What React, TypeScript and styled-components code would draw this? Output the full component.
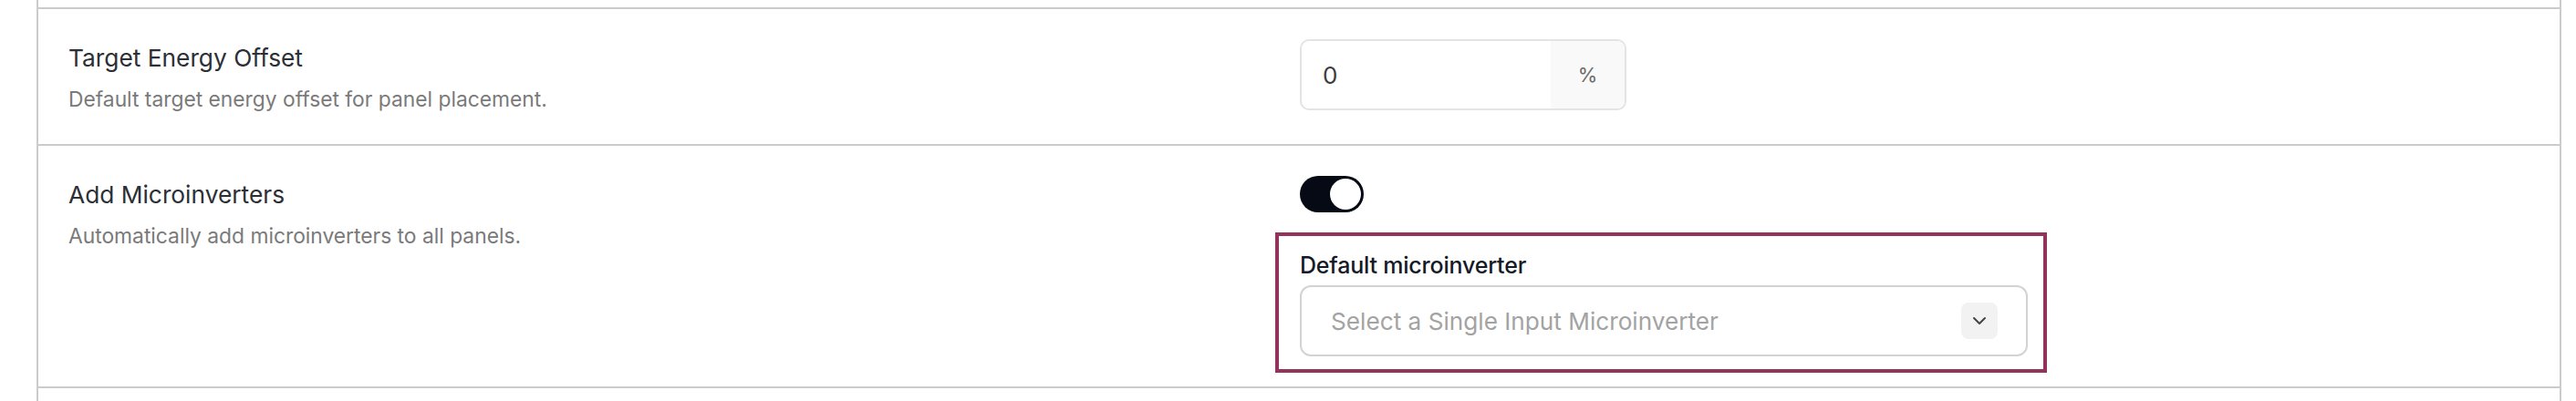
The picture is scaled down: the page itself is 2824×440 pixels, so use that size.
import React from 'react';
import styled, { createGlobalStyle } from 'styled-components';
import { ChevronDown } from 'lucide-react';

const GlobalStyle = createGlobalStyle`
	html,
	body {
		margin: 0;
		padding: 0;
		background: #ffffff;
	}

	body {
		font-family: Inter, 'Noto Sans', sans-serif;
		-webkit-font-smoothing: antialiased;
	}
`;

const Panel = styled.div`
	margin-left: 40px;
	width: 2768px;
	box-sizing: border-box;
	border-left: 2px solid #cbcbcb;
	border-right: 2px solid #cbcbcb;
`;

const Stub = styled.div<{ $height: number; $ruled?: boolean }>`
	height: ${(p) => p.$height}px;
	border-top: ${(p) => (p.$ruled ? '2px solid #cbcbcb' : 'none')};
`;

const Row = styled.div`
	display: grid;
	grid-template-columns: 1350px 1fr;
	align-items: start;
	padding: 33px 33px;
	border-top: 2px solid #cbcbcb;
`;

const Info = styled.div`
	display: flex;
	flex-direction: column;
	gap: 8px;
`;

const Title = styled.div`
	font-size: 26.3px;
	line-height: 42px;
	color: #2c2f36;
`;

const Description = styled.div`
	font-size: 22.8px;
	line-height: 32px;
	color: #7a7a7a;
`;

const Controls = styled.div`
	display: flex;
	flex-direction: column;
	align-items: flex-start;
	gap: 40px;
`;

const NumberField = styled.div`
	display: flex;
	width: 358px;
	height: 78px;
	box-sizing: border-box;
	border: 2px solid #e4e4e4;
	border-radius: 10px;
	overflow: hidden;
`;

const NumberValue = styled.div`
	flex: 1;
	display: flex;
	align-items: center;
	padding-left: 23px;
	font-size: 26px;
	color: #3d3d3d;
`;

const Suffix = styled.div`
	width: 81px;
	display: flex;
	align-items: center;
	justify-content: center;
	background: #f9f9f9;
	font-size: 22px;
	color: #6b6b6b;
`;

const Toggle = styled.button<{ $on: boolean }>`
	display: flex;
	justify-content: ${(p) => (p.$on ? 'flex-end' : 'flex-start')};
	align-items: center;
	width: 70px;
	height: 40px;
	padding: 3px;
	box-sizing: border-box;
	border: none;
	border-radius: 20px;
	background: ${(p) => (p.$on ? '#050a15' : '#d4d4d4')};
	cursor: pointer;
`;

const Knob = styled.span`
	width: 34px;
	height: 34px;
	border-radius: 50%;
	background: #ffffff;
`;

const Highlighted = styled.div`
	position: relative;
	width: 798px;
	display: flex;
	flex-direction: column;
	gap: 4px;

	&::before {
		content: '';
		position: absolute;
		top: -18px;
		bottom: -18px;
		left: -27px;
		right: -21px;
		border: 4px solid #93325a;
		pointer-events: none;
	}
`;

const FieldLabel = styled.label`
	font-size: 25px;
	line-height: 36px;
	font-weight: 500;
	letter-spacing: -0.2px;
	color: #141a26;
`;

const SelectBox = styled.div`
	display: flex;
	align-items: center;
	height: 78px;
	box-sizing: border-box;
	padding: 0 31px 0 32px;
	border: 2px solid #d3d3d3;
	border-radius: 12px;
`;

const Placeholder = styled.span`
	flex: 1;
	font-size: 26.2px;
	color: #a3a3a3;
`;

const ChevronButton = styled.span`
	display: flex;
	align-items: center;
	justify-content: center;
	width: 40px;
	height: 40px;
	border-radius: 8px;
	background: #f2f2f2;
	color: #444444;
`;

export default function App() {
	return (
		<>
			<GlobalStyle />
			<Panel>
				<Stub $height={8} />
				<Row>
					<Info>
						<Title>Target Energy Offset</Title>
						<Description>Default target energy offset for panel placement.</Description>
					</Info>
					<Controls>
						<NumberField>
							<NumberValue>0</NumberValue>
							<Suffix>%</Suffix>
						</NumberField>
					</Controls>
				</Row>
				<Row>
					<Info>
						<Title>Add Microinverters</Title>
						<Description>Automatically add microinverters to all panels.</Description>
					</Info>
					<Controls>
						<Toggle $on>
							<Knob />
						</Toggle>
						<Highlighted>
							<FieldLabel>Default microinverter</FieldLabel>
							<SelectBox>
								<Placeholder>Select a Single Input Microinverter</Placeholder>
								<ChevronButton>
									<ChevronDown size={24} strokeWidth={2} />
								</ChevronButton>
							</SelectBox>
						</Highlighted>
					</Controls>
				</Row>
				<Stub $height={14} $ruled />
			</Panel>
		</>
	);
}
